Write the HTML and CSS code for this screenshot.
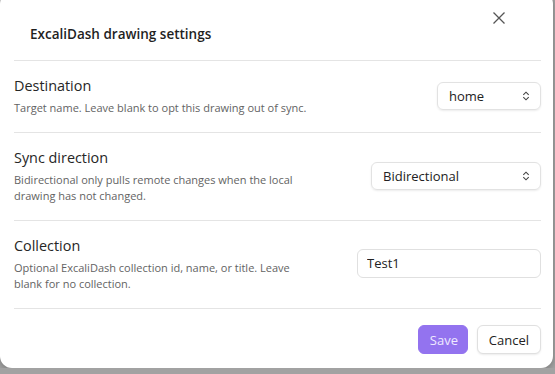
FILE: index.html
```html
<!DOCTYPE html>
<html>
<head>
    <meta charset="UTF-8">
    <title>ExcaliDash drawing settings</title>
    <link rel="stylesheet" href="styles.css">
</head>
<body>
    <div class="dialog">
        <div class="inner">
            <div class="header">
                <h2 class="title">ExcaliDash drawing settings</h2>
                <button class="close" aria-label="Close">
                    <svg width="14" height="14" viewBox="0 0 14 14"><path d="M1.5 1.5 L12.5 12.5 M12.5 1.5 L1.5 12.5" stroke="#555" stroke-width="1.3" fill="none"/></svg>
                </button>
            </div>

            <div class="field">
                <div class="info">
                    <div class="label">Destination</div>
                    <div class="desc">Target name. Leave blank to opt this drawing out of sync.</div>
                </div>
                <div class="select sel-dest">
                    <span>home</span>
                    <svg width="8" height="10" viewBox="0 0 8 10"><path d="M1.3 3.8 L4 1.2 L6.7 3.8 M1.3 6.2 L4 8.8 L6.7 6.2" stroke="#444" stroke-width="1.1" fill="none"/></svg>
                </div>
            </div>

            <div class="field">
                <div class="info">
                    <div class="label">Sync direction</div>
                    <div class="desc">Bidirectional only pulls remote changes when the local drawing has not changed.</div>
                </div>
                <div class="select sel-sync">
                    <span>Bidirectional</span>
                    <svg width="8" height="10" viewBox="0 0 8 10"><path d="M1.3 3.8 L4 1.2 L6.7 3.8 M1.3 6.2 L4 8.8 L6.7 6.2" stroke="#444" stroke-width="1.1" fill="none"/></svg>
                </div>
            </div>

            <div class="field">
                <div class="info">
                    <div class="label">Collection</div>
                    <div class="desc">Optional ExcaliDash collection id, name, or title. Leave blank for no collection.</div>
                </div>
                <input class="text-input" type="text" value="Test1">
            </div>

            <div class="footer">
                <button class="btn btn-primary">Save</button>
                <button class="btn">Cancel</button>
            </div>
        </div>
    </div>
</body>
</html>
```

FILE: styles.css
```css
body {
    margin: 0;
    background: #a2a2a2;
    font-family: "Open Sans", "Noto Sans", sans-serif;
    overflow: hidden;
}

.dialog {
    width: 553px;
    margin-top: -8px;
    background: #ffffff;
    border-radius: 12px;
    box-shadow: 0 2px 6px rgba(0, 0, 0, 0.25);
}

.inner {
    margin: 0 12px 0 14px;
}

.header {
    position: relative;
    padding: 32px 16px 16px;
    border-bottom: 1px solid #e4e4e4;
}

.title {
    margin: 0;
    font-size: 13.5px;
    line-height: 20px;
    font-weight: 600;
    color: #1f1f1f;
}

.close {
    position: absolute;
    top: 19px;
    right: 35px;
    width: 14px;
    height: 14px;
    padding: 0;
    border: none;
    background: none;
}

.close svg {
    display: block;
}

.field {
    display: flex;
    align-items: center;
    justify-content: space-between;
    padding: 15px 0 16px;
    border-bottom: 1px solid #e4e4e4;
}

.info {
    max-width: 305px;
}

.label {
    font-size: 14.4px;
    line-height: 20px;
    color: #262626;
}

.desc {
    margin-top: 4px;
    font-size: 11px;
    line-height: 16px;
    color: #636363;
}

.select {
    box-sizing: border-box;
    height: 28px;
    display: flex;
    align-items: center;
    justify-content: space-between;
    padding: 0 10px 0 11px;
    border: 1px solid #e2e2e2;
    border-radius: 6px;
    box-shadow: 0 1px 2px rgba(0, 0, 0, 0.08);
    font-size: 13px;
    color: #222;
}

.select svg {
    display: block;
}

.sel-dest {
    width: 104px;
}

.sel-sync {
    width: 170px;
}

.text-input {
    box-sizing: border-box;
    width: 184px;
    height: 29px;
    margin-top: -2px;
    padding: 0 9px;
    border: 1px solid #e0e0e0;
    border-radius: 6px;
    font-family: inherit;
    font-size: 13px;
    color: #222;
    outline: none;
}

.footer {
    display: flex;
    justify-content: flex-end;
    gap: 9px;
    padding: 16px 0 14px;
}

.btn {
    box-sizing: border-box;
    height: 29px;
    padding: 0 11px;
    border: 1px solid #e0e0e0;
    border-radius: 6px;
    background: #fff;
    box-shadow: 0 1px 2px rgba(0, 0, 0, 0.08);
    font-family: inherit;
    font-size: 13px;
    color: #222;
}

.btn-primary {
    width: 50px;
    border-color: #9373ef;
    background: #9373ef;
    color: #efeaff;
    box-shadow: none;
}
```
